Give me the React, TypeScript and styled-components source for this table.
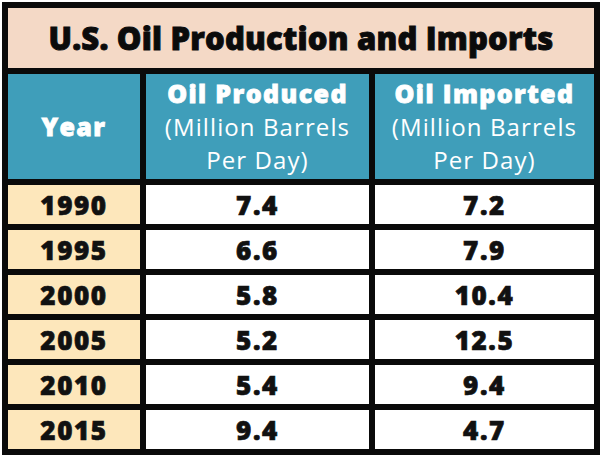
import React from 'react';
import styled, { createGlobalStyle } from 'styled-components';

const GlobalStyle = createGlobalStyle`
    html, body {
        margin: 0;
        padding: 0;
        background: #ffffff;
    }
`;

const Page = styled.div`
    width: 600px;
    height: 456px;
    padding: 2px 0 0 2px;
    box-sizing: border-box;
    font-family: 'Open Sans', Lato, sans-serif;
`;

const Table = styled.div`
    display: grid;
    grid-template-columns: 132px 223px 219px;
    grid-template-rows: 60px 105px repeat(6, 39px);
    gap: 6px;
    padding: 6px;
    background: #0a0a0a;
    width: 598px;
    box-sizing: border-box;
`;

const Title = styled.div`
    grid-column: 1 / -1;
    display: flex;
    align-items: center;
    justify-content: center;
    background: #f4d9c6;
    color: #0b0b0b;
    font-weight: 800;
    font-size: 31px;
    letter-spacing: 0.2px;
    -webkit-text-stroke: 0.9px #0b0b0b;
`;

const HeadCell = styled.div`
    display: flex;
    flex-direction: column;
    align-items: center;
    justify-content: center;
    background: #3f9eba;
    color: #ffffff;
    text-align: center;
`;

const HeadMain = styled.div`
    font-weight: 800;
    font-size: 25px;
    line-height: 33px;
    letter-spacing: 1.4px;
    -webkit-text-stroke: 0.8px #ffffff;
`;

const HeadSub = styled.div`
    font-weight: 400;
    font-size: 24px;
    line-height: 33px;
    letter-spacing: 1.1px;
`;

const Cell = styled.div<{ $year?: boolean }>`
    display: flex;
    align-items: center;
    justify-content: center;
    background: ${(p) => (p.$year ? '#fde7bb' : '#ffffff')};
    color: #111111;
    font-weight: 800;
    font-size: 26px;
    letter-spacing: 1.6px;
    -webkit-text-stroke: 0.7px #111111;
`;

const rows = [
    ['1990', '7.4', '7.2'],
    ['1995', '6.6', '7.9'],
    ['2000', '5.8', '10.4'],
    ['2005', '5.2', '12.5'],
    ['2010', '5.4', '9.4'],
    ['2015', '9.4', '4.7'],
];

const App = () => {
    return (
        <Page>
            <GlobalStyle />
            <Table>
                <Title>U.S. Oil Production and Imports</Title>
                <HeadCell>
                    <HeadMain>Year</HeadMain>
                </HeadCell>
                <HeadCell>
                    <HeadMain>Oil Produced</HeadMain>
                    <HeadSub>(Million Barrels</HeadSub>
                    <HeadSub>Per Day)</HeadSub>
                </HeadCell>
                <HeadCell>
                    <HeadMain>Oil Imported</HeadMain>
                    <HeadSub>(Million Barrels</HeadSub>
                    <HeadSub>Per Day)</HeadSub>
                </HeadCell>
                {rows.map(([year, produced, imported]) => (
                    <React.Fragment key={year}>
                        <Cell $year>{year}</Cell>
                        <Cell>{produced}</Cell>
                        <Cell>{imported}</Cell>
                    </React.Fragment>
                ))}
            </Table>
        </Page>
    );
};

export default App;
